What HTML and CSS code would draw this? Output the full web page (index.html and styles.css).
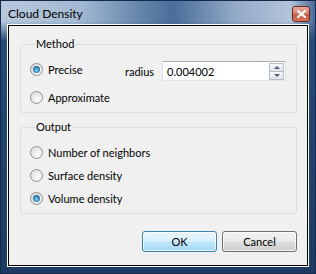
FILE: index.html
```html
<!DOCTYPE html>
<html lang="en">
<head>
    <meta charset="UTF-8">
    <title>Cloud Density</title>
    <link rel="stylesheet" href="styles.css">
</head>
<body>
    <div class="window">
        <div class="titlebar">
            <span class="title">Cloud Density</span>
            <span class="close">
                <svg width="9" height="8" viewBox="0 0 9 8"><path d="M1 1 L8 7 M8 1 L1 7" stroke="#fff" stroke-width="2.2" stroke-linecap="square"/></svg>
            </span>
        </div>
        <div class="client-edge">
            <div class="client">
                <fieldset class="group method">
                    <legend>Method</legend>
                    <div class="row first">
                        <label class="option opt-precise"><span class="radio checked"></span>Precise</label>
                        <span class="radius-label">radius</span>
                        <div class="spinbox">
                            <span class="value">0.004002</span>
                            <span class="spin">
                                <span class="spin-btn up"></span>
                                <span class="spin-btn down"></span>
                            </span>
                        </div>
                    </div>
                    <div class="row">
                        <label class="option"><span class="radio"></span>Approximate</label>
                    </div>
                </fieldset>

                <fieldset class="group output">
                    <legend>Output</legend>
                    <div class="row">
                        <label class="option"><span class="radio"></span>Number of neighbors</label>
                    </div>
                    <div class="row">
                        <label class="option"><span class="radio"></span>Surface density</label>
                    </div>
                    <div class="row">
                        <label class="option"><span class="radio checked"></span>Volume density</label>
                    </div>
                </fieldset>

                <div class="buttons">
                    <button class="btn default">OK</button>
                    <button class="btn">Cancel</button>
                </div>
            </div>
        </div>
    </div>
</body>
</html>
```

FILE: styles.css
```css
body {
    margin: 0;
    font-family: Lato, "Open Sans", sans-serif;
    font-size: 11px;
    color: #000;
}

.window {
    width: 316px;
    height: 274px;
    box-sizing: border-box;
    border: 1px solid #15294a;
    background: linear-gradient(180deg, rgba(0,0,0,0) 0, rgba(0,0,0,0) 20px, #274a78 40px, #1d3a62 100%),
                linear-gradient(90deg, #b7c8db 0%, #a3b9d3 25%, #5f81a7 46%, #4a6d99 55%, #94abc9 75%, #b2c4d9 92%, #4a6a95 100%);
    padding: 0 6px 6px 6px;
    display: flex;
    flex-direction: column;
}

.titlebar {
    height: 23px;
    display: flex;
    align-items: center;
    justify-content: space-between;
}

.title {
    font-size: 12px;
    padding-left: 1px;
    padding-top: 1px;
}

.close {
    width: 16px;
    height: 14px;
    margin-right: -1px;
    margin-top: 3px;
    border: 1px solid #6b2a24;
    border-radius: 3px;
    background: linear-gradient(180deg, #e9a99a 0%, #d98370 45%, #c75846 55%, #d8705a 100%);
    display: flex;
    align-items: center;
    justify-content: center;
}

.client-edge {
    flex: 1;
    border: 1px solid #fff;
    display: flex;
}

.client {
    flex: 1;
    border: 1px solid #000;
    background: #f0f0f0;
    padding: 10px 10px 0 11px;
    display: flex;
    flex-direction: column;
}

.group {
    margin: 0;
    padding: 0 0 0 9px;
    border: 1px solid #d5dfe5;
    border-radius: 3px;
    min-width: 0;
}

.group legend {
    margin-left: 5px;
    padding: 0 1px;
    line-height: 16px;
}

.method {
    padding-top: 8px;
    padding-bottom: 5px;
}

.output {
    margin-top: 6px;
    padding-top: 6px;
    padding-bottom: 3px;
}

.row {
    display: flex;
    align-items: center;
    height: 23px;
}

.method .row {
    height: 20px;
}

.method .row + .row {
    margin-top: 7px;
}

.option {
    display: flex;
    align-items: center;
    gap: 5px;
}

.opt-precise {
    width: 95px;
    margin-top: -2px;
}

.radio {
    width: 11px;
    height: 11px;
    border: 1px solid #8f8f8f;
    border-radius: 50%;
    background: radial-gradient(circle at 65% 70%, #fdfdfd 0%, #eeeeee 40%, #d6d6d6 100%);
    position: relative;
}

.radio.checked::after {
    content: "";
    position: absolute;
    left: 2px;
    top: 2px;
    width: 7px;
    height: 7px;
    border-radius: 50%;
    background: radial-gradient(circle at 50% 60%, #8ad6f7 0%, #3a8fc4 45%, #0d3f66 100%);
}

.radius-label {
    margin-right: 8px;
    margin-top: 3px;
}

.spinbox {
    width: 122px;
    height: 18px;
    border: 1px solid #dde3ea;
    border-top-color: #abadb3;
    background: #fff;
    display: flex;
    align-items: center;
    justify-content: space-between;
    margin-top: 2px;
}

.value {
    padding-left: 4px;
}

.spin {
    display: flex;
    flex-direction: column;
    margin-right: 1px;
}

.spin-btn {
    width: 13px;
    height: 7px;
    border: 1px solid #b4bcc7;
    background: linear-gradient(180deg, #f8f8f8, #e2e4e8);
    position: relative;
}

.spin-btn + .spin-btn {
    margin-top: -1px;
}

.spin-btn::after {
    content: "";
    position: absolute;
    left: 4px;
    border-left: 3px solid transparent;
    border-right: 3px solid transparent;
}

.spin-btn.up::after {
    top: 2px;
    border-bottom: 3px solid #4e5e7a;
}

.spin-btn.down::after {
    top: 2px;
    border-top: 3px solid #4e5e7a;
}

.buttons {
    display: flex;
    justify-content: flex-end;
    gap: 5px;
    margin-top: 17px;
}

.btn {
    width: 75px;
    height: 21px;
    padding: 0;
    font-family: inherit;
    font-size: 11px;
    color: #000;
    border: 1px solid #707070;
    border-radius: 3px;
    background: linear-gradient(180deg, #f2f2f2 0%, #ebebeb 48%, #dddddd 52%, #cfcfcf 100%);
    box-shadow: inset 0 0 0 1px rgba(255, 255, 255, 0.7);
}

.btn.default {
    border-color: #3c7fb1;
    background: linear-gradient(180deg, #eaf6fd 0%, #d9f0fc 48%, #bee6fd 52%, #a7d9f5 100%);
}
```
